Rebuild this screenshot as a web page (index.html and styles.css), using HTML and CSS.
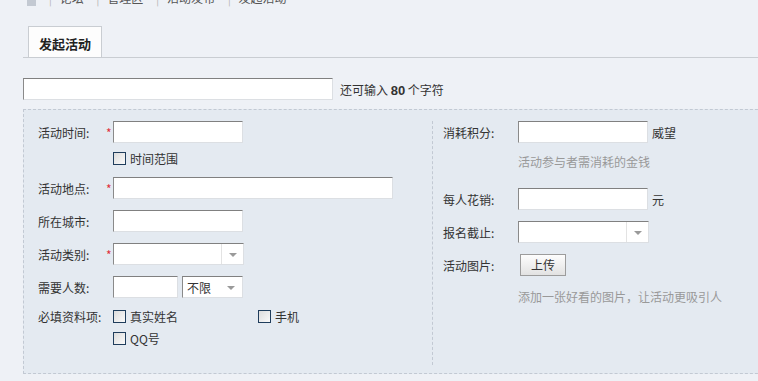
FILE: index.html
```html
<!DOCTYPE html>
<html lang="zh-CN">
<head>
  <meta charset="UTF-8" />
  <title>发起活动</title>
  <link rel="stylesheet" href="styles.css">
</head>
<body>

  <!-- BREADCRUMB (scrolled partly out of view) -->
  <div class="crumb">
    <span class="home"></span>
    <span class="sep">|</span> 论坛
    <span class="sep">|</span> 管理区
    <span class="sep">|</span> 活动发布
    <span class="sep">|</span> 发起活动
  </div>

  <!-- TABS -->
  <div class="tabs">
    <span class="tab">发起活动</span>
  </div>

  <!-- TITLE -->
  <div class="title-row">
    <span class="txt title"></span>
    <span class="tip">还可输入 <b>80</b> 个字符</span>
  </div>

  <!-- ACTIVITY FORM -->
  <div class="panel">
    <div class="col col-left">
      <div class="row">
        <span class="label">活动时间:<i>*</i></span>
        <span class="txt"></span>
      </div>
      <div class="row sub">
        <span class="label"></span>
        <span class="opt"><span class="chk"></span>时间范围</span>
      </div>
      <div class="row r-place">
        <span class="label">活动地点:<i>*</i></span>
        <span class="txt wide"></span>
      </div>
      <div class="row">
        <span class="label">所在城市:</span>
        <span class="txt"></span>
      </div>
      <div class="row">
        <span class="label">活动类别:<i>*</i></span>
        <span class="sel"><span class="arrow"></span></span>
      </div>
      <div class="row">
        <span class="label">需要人数:</span>
        <span class="txt small"></span>
        <span class="sel sel-small">不限<span class="arrow"></span></span>
      </div>
      <div class="row sub r-need">
        <span class="label">必填资料项:</span>
        <span class="opt"><span class="chk"></span>真实姓名</span>
        <span class="opt"><span class="chk"></span>手机</span>
      </div>
      <div class="row sub r-qq">
        <span class="label"></span>
        <span class="opt"><span class="chk"></span>QQ号</span>
      </div>
    </div>

    <div class="col col-right">
      <div class="row">
        <span class="label">消耗积分:</span>
        <span class="txt"></span>
        <span class="unit">威望</span>
      </div>
      <div class="row hint r-hint1">
        <span class="label"></span>
        活动参与者需消耗的金钱
      </div>
      <div class="row r-cost">
        <span class="label">每人花销:</span>
        <span class="txt"></span>
        <span class="unit">元</span>
      </div>
      <div class="row">
        <span class="label">报名截止:</span>
        <span class="sel"><span class="arrow"></span></span>
      </div>
      <div class="row r-pic">
        <span class="label">活动图片:</span>
        <span class="btn">上传</span>
      </div>
      <div class="row hint r-hint2">
        <span class="label"></span>
        添加一张好看的图片，让活动更吸引人
      </div>
    </div>
  </div>

</body>
</html>
```

FILE: styles.css
```css
/* BASIC RESET & BODY */
* {
  margin: 0;
  padding: 0;
  box-sizing: border-box;
}
body {
  font-family: "Noto Sans CJK SC", "Liberation Sans", sans-serif;
  font-size: 12px;
  color: #333;
  background-color: #eef1f6;
  overflow: hidden;
}

/* BREADCRUMB */
.crumb {
  height: 14px;
  margin-top: -9px;
  padding-left: 27px;
  line-height: 14px;
  color: #555;
  white-space: nowrap;
}
.crumb .home {
  display: inline-block;
  width: 9px;
  height: 12px;
  background: #c3c9d2;
  vertical-align: middle;
}
.crumb .sep {
  color: #bbb;
  margin: 0 5px 0 10px;
}

/* TABS */
.tabs {
  margin: 21px 0 0 23px;
  padding-left: 5px;
  height: 32px;
  border-bottom: 1px solid #c9cdd2;
}
.tab {
  display: inline-block;
  height: 31px;
  padding: 0 10px;
  line-height: 33px;
  font-size: 13px;
  font-weight: bold;
  color: #222;
  background: #fdfdfd;
  border: 1px solid #c9cdd2;
  border-bottom: none;
}

/* INPUT-LIKE BOXES */
.txt {
  display: inline-block;
  width: 130px;
  height: 22px;
  background: #fff;
  border: 1px solid #dcdfe3;
  border-top-color: #808080;
  border-left-color: #8a8a8a;
}
.txt.wide { width: 280px; }
.txt.small { width: 65px; }

.sel {
  position: relative;
  display: inline-block;
  width: 131px;
  height: 22px;
  padding-left: 4px;
  line-height: 22px;
  background: #fff;
  border: 1px solid #dcdfe3;
  border-top-color: #808080;
  border-left-color: #8a8a8a;
}
.sel .arrow {
  position: absolute;
  top: 0;
  right: 0;
  width: 22px;
  height: 20px;
  border-left: 1px solid #e3e3e3;
}
.sel .arrow::after {
  content: "";
  position: absolute;
  top: 9px;
  left: 7px;
  border-left: 4px solid transparent;
  border-right: 4px solid transparent;
  border-top: 4px solid #9a9a9a;
}
.sel-small {
  width: 61px;
  margin-left: 4px;
}
.sel-small .arrow { border-left: none; }

/* TITLE ROW */
.title-row {
  display: flex;
  align-items: center;
  margin: 20px 0 0 23px;
}
.txt.title { width: 310px; }
.tip {
  margin-left: 7px;
}
.tip b {
  font-family: "Liberation Sans", Arial, sans-serif;
  font-size: 13px;
  color: #333;
}

/* PANEL */
.panel {
  display: flex;
  width: 760px;
  height: 265px;
  margin: 9px 0 0 23px;
  background: #e4eaf1;
  border: 1px dashed #c2c9d3;
}
.col-left {
  width: 408px;
  padding: 11px 0 0 14px;
}
.col-right {
  margin: 11px 0 8px;
  padding-left: 10px;
  border-left: 1px dashed #c2c9d3;
}

/* ROWS */
.row {
  display: flex;
  align-items: center;
  height: 22px;
  margin-bottom: 11px;
}
.label {
  display: flex;
  justify-content: space-between;
  align-items: center;
  flex-shrink: 0;
  width: 75px;
  color: #333;
}
.label i {
  width: 7px;
  font-style: normal;
  color: #e0313c;
  line-height: 12px;
  margin-top: 1px;
}
.unit {
  margin-left: 4px;
}

.row.sub {
  height: 14px;
}
.col-left .row:first-child { margin-bottom: 8px; }
.col-left .sub:nth-child(2) { margin-bottom: 12px; }
.r-need { margin-top: 6px; margin-bottom: 8px !important; }

/* CHECKBOX OPTIONS */
.opt {
  display: flex;
  align-items: center;
  width: 145px;
}
.chk {
  display: inline-block;
  width: 13px;
  height: 13px;
  margin-right: 4px;
  border: 1px solid #1f3d5c;
  background: linear-gradient(135deg, #dcdcdc, #fafafa);
}

/* RIGHT COLUMN */
.hint {
  color: #999;
  height: 14px;
}
.r-hint1 { margin-bottom: 20px; }
.r-pic { margin-top: 2px; margin-bottom: 13px; }
.btn {
  display: inline-block;
  width: 46px;
  height: 22px;
  margin-left: 2px;
  line-height: 20px;
  text-align: center;
  color: #333;
  border: 1px solid #9c9c9c;
  background: linear-gradient(#fdfdfd, #e2e2e2);
}
```
